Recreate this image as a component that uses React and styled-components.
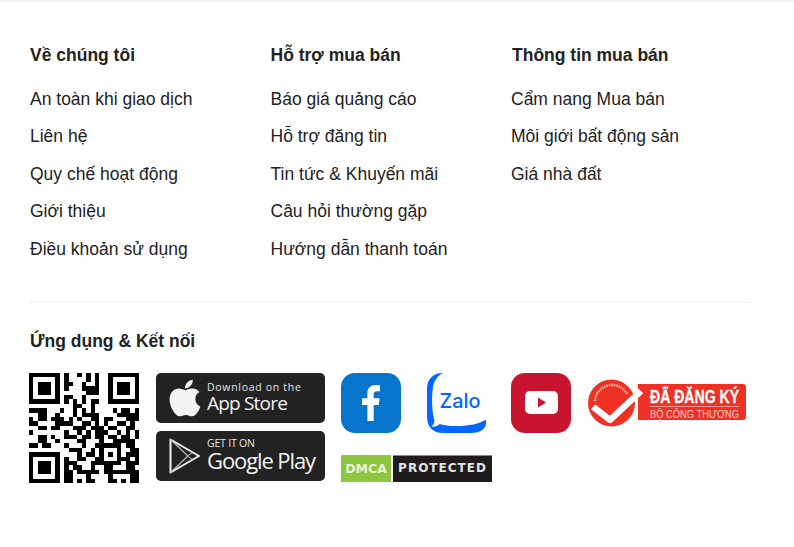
import React from "react";
import styled, { createGlobalStyle } from "styled-components";
import { FaApple } from "react-icons/fa";

const GlobalStyle = createGlobalStyle`
  html, body {
    margin: 0;
    padding: 0;
    background: #fff;
    font-family: "Liberation Sans", Arial, sans-serif;
    color: #222;
  }
`;

const Footer = styled.footer`
  border-top: 2px solid #f4f4f4;
  padding: 41px 43px 0 29px;
  height: 545px;
  box-sizing: border-box;
`;

const Columns = styled.div`
  display: grid;
  grid-template-columns: repeat(3, 240.5px);
  padding-bottom: 34px;
  border-bottom: 1px solid #f1f1f1;
`;

const Heading = styled.h3`
  margin: 0 0 13.7px;
  padding-left: ${(p) => p.$indent || 0}px;
  font-size: 17.5px;
  line-height: 24px;
  font-weight: 700;
  color: #222;
`;

const LinkList = styled.ul`
  list-style: none;
  margin: 0;
  padding: 0;
`;

const LinkItem = styled.li`
  height: 37.5px;
  font-size: 17.5px;
  line-height: 37.5px;
  color: #222;
  padding-left: 1px;
`;

const Section = styled.section`
  padding-top: 26px;
`;

const AppRow = styled.div`
  display: flex;
  align-items: flex-start;
  margin-top: 19.6px;
`;

const QrBox = styled.svg`
  width: 110px;
  height: 110px;
  flex: none;
  margin-right: 17px;
  display: block;
`;

const StoreColumn = styled.div`
  display: flex;
  flex-direction: column;
  gap: 8px;
  margin-right: 16px;
`;

const StoreButton = styled.a`
  display: flex;
  align-items: center;
  width: 169px;
  height: 50px;
  background: #222;
  border-radius: 5px;
  color: #f4f4f4;
  box-sizing: border-box;
`;

const StoreIcon = styled.span`
  width: 51px;
  padding-left: 6px;
  box-sizing: border-box;
  flex: none;
  display: flex;
  justify-content: center;
`;

const StoreText = styled.span`
  display: flex;
  flex-direction: column;
  padding-bottom: ${(p) => p.$lift}px;
`;

const SmallLine = styled.span`
  font-family: "Open Sans", sans-serif;
  font-size: ${(p) => p.$size}px;
  line-height: 13px;
  letter-spacing: ${(p) => p.$spacing}px;
  color: #e6e6e6;
`;

const BigLine = styled.span`
  font-family: "Open Sans", sans-serif;
  font-size: ${(p) => p.$size}px;
  font-weight: 500;
  line-height: ${(p) => p.$line}px;
  letter-spacing: ${(p) => p.$spacing}px;
  color: #f4f4f4;
  white-space: nowrap;
`;

const SocialColumn = styled.div`
  width: 151px;
  margin-right: 19px;
`;

const IconRow = styled.div`
  display: flex;
  gap: 26px;
  margin-bottom: 22px;
`;

const IconSquare = styled.a`
  width: 60px;
  height: 60px;
  flex: none;
  border-radius: 14px;
  background: ${(p) => p.$bg};
  display: flex;
  align-items: center;
  justify-content: center;
`;

const ZaloIcon = styled.svg`
  width: 60px;
  height: 60px;
  flex: none;
  display: block;
`;

const Dmca = styled.div`
  display: flex;
  height: 27px;
  gap: 2px;
  font-family: "DejaVu Sans", sans-serif;
  font-weight: 700;
  font-size: 12px;
  line-height: 27px;
`;

const DmcaGreen = styled.span`
  width: 50px;
  background: #8dc63f;
  color: #e8f3d8;
  text-align: center;
  font-size: 12.5px;
`;

const DmcaBlack = styled.span`
  flex: 1;
  background: #1e1c1d;
  box-shadow: inset 0 1px 0 #888;
  color: #e4e4e4;
  text-align: center;
  letter-spacing: 1px;
`;

const RegisteredBadge = styled.svg`
  width: 160px;
  height: 48px;
  flex: none;
  margin: 6px 0 0 16px;
  display: block;
`;

// rows of the QR code, read off the reference module by module
const rows = [
  "1111111" + "0" + "100101010" + "0" + "1111111",
  "1000001" + "0" + "100001010" + "0" + "1000001",
  "1011101" + "0" + "110010010" + "0" + "1011101",
  "1011101" + "0" + "100011110" + "0" + "1011101",
  "1011101" + "0" + "000001110" + "0" + "1011101",
  "1000001" + "0" + "110010000" + "0" + "1000001",
  "1111111" + "0" + "101010110" + "0" + "1111111",
  "00000000" + "001100100" + "00000000",
  "11110001" + "001010100" + "00101101",
  "00110010" + "001011110" + "00011111",
  "10110111" + "010100110" + "11000111",
  "11000011" + "110011010" + "10011010",
  "00110110" + "001110111" + "01100110",
  "10000000" + "100101011" + "10010101",
  "00110100" + "111011011" + "01101101",
  "00110010" + "000110001" + "00111110",
  "11011000" + "10001001" + "11111" + "0110",
  "00000000" + "01110010" + "10001" + "0011",
  "11111110" + "00010110" + "10101" + "0111",
  "10000010" + "10011001" + "10001" + "1101",
  "10111010" + "11100011" + "11111" + "0111",
  "10111010" + "10110010" + "01100" + "0110",
  "10111010" + "11011111" + "01111" + "1111",
  "10000010" + "11000100" + "00100" + "0011",
  "11111110" + "11010110" + "00110" + "1011",
];

const QrCode = () => (
  <QrBox viewBox="0 0 25 25" shapeRendering="crispEdges">
    {rows.flatMap((row, y) =>
      row.split("").map((cell, x) =>
        cell === "1" ? <rect key={`${x}-${y}`} x={x} y={y} width="1.02" height="1.02" fill="#000" /> : null
      )
    )}
  </QrBox>
);

const PlayLogo = () => (
  <svg width="32" height="36" viewBox="0 0 32 36" fill="none" stroke="#f0f0f0" strokeWidth="2" strokeLinejoin="round">
    <path d="M1.500 1.500 L30 18 L1.500 34.500 Z" />
    <path d="M1.500 1.500 L19 18 L1.500 34.500" strokeWidth="1.100" stroke="#bdbdbd" />
    <path d="M24 14.500 L18 18 L24 21.500" strokeWidth="1" stroke="#bdbdbd" />
  </svg>
);

const FacebookGlyph = () => (
  <svg width="18" height="36" viewBox="0 0 20 38" preserveAspectRatio="none">
    <path fill="#fff" d="M6 38V21H0v-7h6V9c0-6 3.600-9 9-9 2 0 3.800.1 5 .3v6.200h-3.400c-2.800 0-3.600 1.300-3.600 3.400V14h6.600l-1 7H13v17z" />
  </svg>
);

const YoutubeGlyph = () => (
  <svg width="33" height="23" viewBox="0 0 33 23">
    <rect width="33" height="23" rx="5" fill="#fff" />
    <path d="M13 6.500 L21 11.500 L13 16.500 Z" fill="#c9142f" />
  </svg>
);

const Zalo = () => (
  <ZaloIcon viewBox="0 0 60 60">
    <path
      fill="#0068ff"
      d="M16 0C6 0 0 6 0 16V44C0 54 6 60 16 60H44C51 60 59 57 59 50V30H20V0Z"
    />
    <path
      fill="#fff"
      d="M16 0H60V46C52 51 42 53 30 53C22 53 17 52.500 13 51C10 53 8 54 4.500 53.500C7 51 8 49 7 46C5 38 4.500 24 6 14C7 8 10 3 16 0Z"
    />
    <text x="12.500" y="34.500" fill="#0068ff" fontFamily="Inter, sans-serif" fontSize="20" fontWeight="500" textLength="41" lengthAdjust="spacingAndGlyphs">
      Zalo
    </text>
  </ZaloIcon>
);

const Registered = () => (
  <RegisteredBadge viewBox="0 0 160 48">
    <path fill="#ee3124" d="M51 5H156a3 3 0 0 1 3 3V38a3 3 0 0 1-3 3H51Z" />
    <circle cx="24.500" cy="24" r="23.500" fill="#ee3124" />
    <path d="M8 22 A17 17 0 0 1 40 15" fill="none" stroke="#f9b7b0" strokeWidth="2.500" strokeDasharray="1.500 1" />
    <path d="M6 27.700 L23 41 L54 12" fill="none" stroke="#fff" strokeWidth="6.500" strokeLinejoin="round" />
    <text transform="translate(63 24) scale(0.76 1)" fill="#fff" stroke="#fff" strokeWidth="0.300" fontFamily="Liberation Sans, sans-serif" fontWeight="700" fontSize="18.500">
      ĐÃ ĐĂNG KÝ
    </text>
    <rect x="62" y="27" width="90" height="0.800" fill="#f9c4be" />
    <text transform="translate(63 39) scale(0.85 1)" fill="#f9d0cb" fontFamily="Liberation Sans, sans-serif" fontSize="11">
      BỘ CÔNG THƯƠNG
    </text>
  </RegisteredBadge>
);

const columns = [
  {
    title: "Về chúng tôi",
    links: ["An toàn khi giao dịch", "Liên hệ", "Quy chế hoạt động", "Giới thiệu", "Điều khoản sử dụng"],
  },
  {
    title: "Hỗ trợ mua bán",
    links: ["Báo giá quảng cáo", "Hỗ trợ đăng tin", "Tin tức & Khuyến mãi", "Câu hỏi thường gặp", "Hướng dẫn thanh toán"],
  },
  {
    title: "Thông tin mua bán",
    indent: 1,
    links: ["Cẩm nang Mua bán", "Môi giới bất động sản", "Giá nhà đất"],
  },
];

export default function App() {
  return (
    <>
      <GlobalStyle />
      <Footer>
        <Columns>
          {columns.map((col) => (
            <div key={col.title}>
              <Heading $indent={(col.indent || 0) + 1}>{col.title}</Heading>
              <LinkList>
                {col.links.map((link) => (
                  <LinkItem key={link}>{link}</LinkItem>
                ))}
              </LinkList>
            </div>
          ))}
        </Columns>
        <Section>
          <Heading $indent={1}>Ứng dụng &amp; Kết nối</Heading>
          <AppRow>
            <QrCode />
            <StoreColumn>
              <StoreButton>
                <StoreIcon>
                  <FaApple size={42} color="#f4f4f4" />
                </StoreIcon>
                <StoreText $lift={1}>
                  <SmallLine $size={10.5} $spacing={0.7}>Download on the</SmallLine>
                  <BigLine $size={19} $line={19} $spacing={-0.8}>App Store</BigLine>
                </StoreText>
              </StoreButton>
              <StoreButton>
                <StoreIcon>
                  <PlayLogo />
                </StoreIcon>
                <StoreText $lift={3}>
                  <SmallLine $size={10.5} $spacing={-0.2}>GET IT ON</SmallLine>
                  <BigLine $size={22} $line={21} $spacing={-1.1}>Google Play</BigLine>
                </StoreText>
              </StoreButton>
            </StoreColumn>
            <SocialColumn>
              <IconRow>
                <IconSquare $bg="#0875cc">
                  <FacebookGlyph />
                </IconSquare>
                <Zalo />
              </IconRow>
              <Dmca>
                <DmcaGreen>DMCA</DmcaGreen>
                <DmcaBlack>PROTECTED</DmcaBlack>
              </Dmca>
            </SocialColumn>
            <IconSquare $bg="#c9142f">
              <YoutubeGlyph />
            </IconSquare>
            <Registered />
          </AppRow>
        </Section>
      </Footer>
    </>
  );
}
